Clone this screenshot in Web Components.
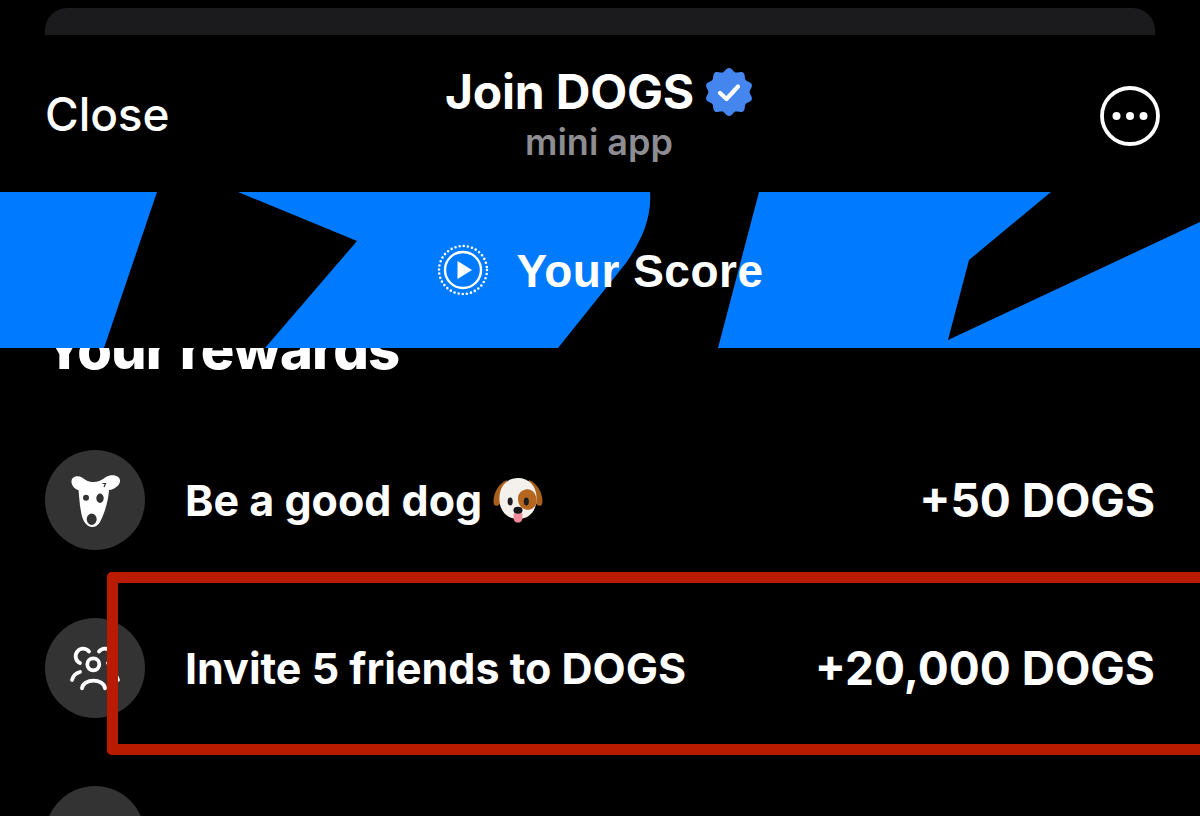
<!doctype html>
<html lang="en">
  <head>
    <meta charset="UTF-8">
    <title>Join DOGS</title>
    <style>
      html, body { margin: 0; background: #000; overflow: hidden; }
      body { width: 1200px; height: 816px; position: relative; font-family: Inter, "Liberation Sans", sans-serif; color: #fff; }
    </style>
  </head>
  <body>
    <sheet-peek></sheet-peek>
    <app-header title="Join DOGS" subtitle="mini app"></app-header>
    <score-banner>Your Score</score-banner>
    <rewards-list heading="Your rewards">
      <reward-row label="Be a good dog" value="+50 DOGS">
        <svg slot="icon" viewBox="0 0 100 100" width="100" height="100">
          <path fill="#fff" fill-rule="evenodd" d="M26.500 31C27 26 33 25 37 27.500C41 30.500 44 32 48 32C53 32 57 30 61 27C66 24 74 25 75 30C75.500 35 70 39 64 40C63.500 50 60 62 55.500 71C53 76 50 77 46.500 77C42 76 39.500 73 37.500 68C35 60 34.500 50 33.500 40C30 39.500 26 35 26.500 31Z
            M38 47.700a3 3 0 1 0 6 0a3 3 0 1 0 -6 0Z
            M51.300 48.300a3.700 4.700 0 1 0 7.400 0a3.700 4.700 0 1 0 -7.400 0Z
            M41.700 69.300a5 5.700 0 1 0 10 0a5 5.700 0 1 0 -10 0Z"/>
          <path fill="none" stroke="#333" stroke-width="1.200" d="M57.500 33.500L60.500 33.500L59 37"/>
        </svg>
        <svg slot="after" viewBox="0 0 50 48" width="50" height="47">
          <path fill="#a8601c" d="M14 3C6 6 0 15 0 25C0 31 4 30 7 27L14 14Z"/>
          <path fill="#a8601c" d="M36 3C44 6 50 15 50 25C50 31 46 30 43 27L36 14Z"/>
          <path fill="#f4f1ec" d="M25 1C36 1 44 9 44 22C44 35 36 43 25 43C14 43 6 35 6 22C6 9 14 1 25 1Z"/>
          <path fill="#b5671f" d="M32 13C39 11 44 17 44 24C44 31 38 35 32 33C27 31 25 27 25 22C25 17 28 14 32 13Z"/>
          <ellipse cx="17" cy="25" rx="2.600" ry="4" fill="#1c1c22"/>
          <ellipse cx="33.500" cy="25" rx="2.600" ry="4" fill="#1c1c22"/>
          <path fill="#f08c9c" d="M20.500 37H29.500V42C29.500 48 20.500 48 20.500 42Z"/>
          <ellipse cx="25" cy="34" rx="4.600" ry="3.600" fill="#15151a"/>
        </svg>
      </reward-row>
      <reward-row label="Invite 5 friends to DOGS" value="+20,000 DOGS">
        <svg slot="icon" viewBox="0 0 100 100" width="100" height="100" fill="none" stroke="#fff" stroke-width="3.800" stroke-linecap="round">
          <circle cx="48.300" cy="46.300" r="6"/>
          <path d="M37 70.300C38 60 59 60 60 70.300"/>
          <path d="M44 33.500A7.500 7.500 0 1 0 35 45"/>
          <path d="M54 33.500A7.500 7.500 0 1 1 63 45"/>
          <path d="M27 62C28 58 31 55 35 54"/>
          <path d="M73 62C72 58 69 55 65 54"/>
        </svg>
      </reward-row>
      <reward-row></reward-row>
    </rewards-list>
    <highlight-box></highlight-box>

    <script>
      function define(name, css, html, init) {
        customElements.define(name, class extends HTMLElement {
          constructor() {
            super()
            const shadow = this.attachShadow({mode: "open"})
            shadow.innerHTML = `<style>${css}</style>${html}`
            if (init) init(this, shadow)
          }
        })
      }

      define("sheet-peek", `
        :host { display: block; height: 27px; margin: 8px 45px 0; background: #1b1b1d; border-radius: 22px 22px 0 0; }
      `, "")

      define("app-header", `
        :host { display: grid; grid-template-columns: 1fr auto 1fr; height: 157px; padding: 0 40px; box-sizing: border-box; align-items: center; }
        .close { font-size: 46px; font-weight: 500; letter-spacing: -.1px; padding-left: 5px; }
        .mid { display: flex; flex-direction: column; align-items: center; position: relative; left: -1px; }
        .title { display: flex; align-items: center; gap: 11px; font-size: 48px; font-weight: 700; letter-spacing: -.2px; line-height: 54px; }
        .sub { font-size: 36px; font-weight: 600; color: #8d8d92; line-height: 42px; margin-top: 2px; }
        .more { justify-self: end; width: 60px; height: 60px; display: block; position: relative; top: 2px; }
      `, `
        <div class="close">Close</div>
        <div class="mid">
          <div class="title"><span id="t"></span>
            <svg width="48" height="48" viewBox="0 0 48 48">
              <path id="badge" fill="#4486ee"/>
              <path d="M15 25L21.500 31L33 18.500" fill="none" stroke="#fff" stroke-width="4.200" stroke-linecap="round" stroke-linejoin="round"/>
            </svg>
          </div>
          <div class="sub" id="s"></div>
        </div>
        <svg class="more" viewBox="0 0 60 60">
          <circle cx="30" cy="30" r="28" fill="none" stroke="#fff" stroke-width="3.800"/>
          <circle cx="16.500" cy="30" r="4" fill="#fff"/>
          <circle cx="30" cy="30" r="4" fill="#fff"/>
          <circle cx="43.500" cy="30" r="4" fill="#fff"/>
        </svg>
      `, (host, shadow) => {
        shadow.getElementById("t").textContent = host.getAttribute("title")
        shadow.getElementById("s").textContent = host.getAttribute("subtitle")
        // scalloped badge outline
        let d = ""
        for (let i = 0; i <= 360; i += 3) {
          const a = i * Math.PI / 180
          const r = 22.300 + 1.700 * Math.cos(10 * a)
          d += (i ? "L" : "M") + (24 + r * Math.sin(a)).toFixed(2) + " " + (24 - r * Math.cos(a)).toFixed(2)
        }
        shadow.getElementById("badge").setAttribute("d", d + "Z")
      })

      define("score-banner", `
        :host { display: flex; height: 156px; position: relative; z-index: 2; background: #007aff; align-items: center; justify-content: center; gap: 28px; box-sizing: border-box; }
        .shapes { position: absolute; inset: 0; }
        .play, .text { position: relative; }
        .play { display: block; width: 52px; height: 52px; }
        .text { font: 700 46px "Liberation Sans", sans-serif; letter-spacing: .5px; top: 1px; }
      `, `
        <svg class="shapes" width="1200" height="156" viewBox="0 192 1200 156" fill="#000">
          <path d="M157 192L238 192L357 241L265 348L104 348Z"/>
          <path d="M650 192L759 192L718 348L558 348L626 263C640 243 652 220 650 192Z"/>
          <path d="M1051 192L1200 192L1200 222L948 340L969 260Z"/>
        </svg>
        <svg class="play" viewBox="0 0 52 52">
          <circle cx="26" cy="26" r="24" fill="none" stroke="#fff" stroke-width="2.600" stroke-linecap="round" stroke-dasharray="0 4.190"/>
          <circle cx="26" cy="26" r="18" fill="none" stroke="#fff" stroke-width="2.400"/>
          <path d="M20.500 17L35 26L20.500 35Z" fill="#fff"/>
        </svg>
        <span class="text"><slot></slot></span>
      `)

      define("rewards-list", `
        :host { display: block; padding: 0 45px; margin-top: -27px; height: 495px; overflow: hidden; box-sizing: border-box; }
        h2 { margin: 0 0 0 -2px; font-size: 56px; font-weight: 800; line-height: 56px; height: 95px; letter-spacing: -.9px; }
      `, `<h2 id="h"></h2><slot></slot>`, (host, shadow) => {
        shadow.getElementById("h").textContent = host.getAttribute("heading")
      })

      define("reward-row", `
        :host { display: flex; align-items: center; height: 168px; font-size: 43px; font-weight: 700; }
        .icon { flex: none; width: 100px; height: 100px; border-radius: 50%; background: #333334; margin-right: 40px; display: flex; }
        .after { display: flex; margin-left: 11px; }
        .value { margin-left: auto; font-size: 46px; }
      `, `
        <div class="icon"><slot name="icon"></slot></div>
        <span id="l"></span><span class="after"><slot name="after"></slot></span>
        <span class="value" id="v"></span>
      `, (host, shadow) => {
        shadow.getElementById("l").textContent = host.getAttribute("label") || ""
        shadow.getElementById("v").textContent = host.getAttribute("value") || ""
      })

      define("highlight-box", `
        :host { position: absolute; left: 107px; top: 572px; width: 1093px; height: 183px; border: 11px solid #b81b00; border-right: 0; border-radius: 5px 0 0 5px; box-sizing: border-box; z-index: 3; }
      `, "")
    </script>
  </body>
</html>
